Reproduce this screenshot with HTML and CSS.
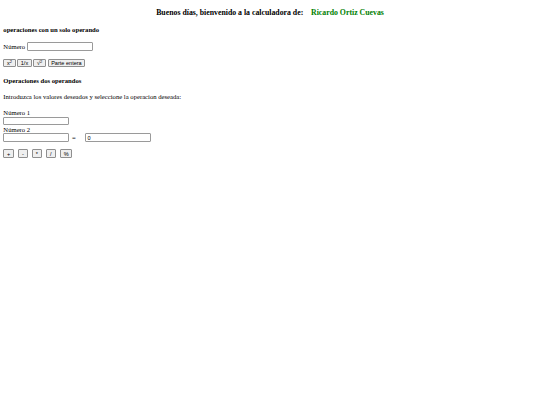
FILE: index.html
```html
<!DOCTYPE html>
<html lang="es">
<head>
<meta charset="utf-8">
<title>Calculadora</title>
<link rel="stylesheet" href="styles.css">
</head>
<body>
<h3 class="title">Buenos días, bienvenido a la calculadora de: &nbsp;&nbsp; <span class="author">Ricardo Ortiz Cuevas</span></h3>

<h4 class="section">operaciones con un solo operando</h4>
<div class="line">Número <input class="field" type="text"></div>
<div class="buttons single">
  <button class="btn">x<sup>2</sup></button>
  <button class="btn">1/x</button>
  <button class="btn">√<sup>2</sup></button>
  <button class="btn">Parte entera</button>
</div>

<h4 class="section second">Operaciones dos operandos</h4>
<p class="intro">Introduzca los valores deseados y seleccione la operacion deseada:</p>

<div class="pair">
  <div class="label">Número 1</div>
  <div class="line"><input class="field" type="text"></div>
  <div class="label">Número 2</div>
  <div class="line"><input class="field" type="text"><span class="eq">=</span><input class="field" type="text" value="0"></div>
</div>
<div class="buttons ops">
  <button class="btn">+</button>
  <button class="btn">-</button>
  <button class="btn">*</button>
  <button class="btn">/</button>
  <button class="btn">%</button>
</div>
</body>
</html>
```
FILE: styles.css
```css
body {
  margin: 3.33px;
  font-family: "Liberation Serif", serif;
  font-size: 6.67px;
  color: #000;
  background: #fff;
}
.title {
  font-size: 7.8px;
  font-weight: bold;
  text-align: center;
  margin: 4.8px 0 7.8px;
}
.author {
  color: #008000;
}
.section {
  font-size: 6.67px;
  font-weight: bold;
  margin: 8.87px 0;
}
.second {
  margin-top: 10.2px;
}
.line {
  display: flex;
  align-items: center;
  gap: 1.67px;
  height: 9px;
}
.label {
  line-height: 7.7px;
}
.field {
  box-sizing: border-box;
  font-family: "Liberation Sans", sans-serif;
  font-size: 5.56px;
  width: 66px;
  height: 8.6px;
  padding: 0 1.5px;
  margin: 0;
  border: 1px solid #9a9a9a;
  border-radius: 1px;
  background: #fff;
  color: #000;
}
.buttons {
  display: flex;
  align-items: center;
}
.single {
  margin-top: 7.7px;
  gap: 1.67px;
}
.ops {
  margin-top: 7px;
  gap: 4.6px;
}
.btn {
  box-sizing: border-box;
  font-family: "Liberation Sans", sans-serif;
  font-size: 5.56px;
  height: 8.6px;
  padding: 0 2.6px;
  margin: 0;
  border: 1px solid #8f8f8f;
  border-radius: 1px;
  background: #efefef;
  color: #000;
  line-height: 6px;
}
.btn sup {
  font-size: 4px;
  line-height: 1;
  vertical-align: 2px;
}
.intro {
  margin: 7.67px 0 8.67px;
}
.eq {
  margin: 0 7.5px 0 1px;
}
.ops .btn {
  min-width: 9.3px;
}
```
